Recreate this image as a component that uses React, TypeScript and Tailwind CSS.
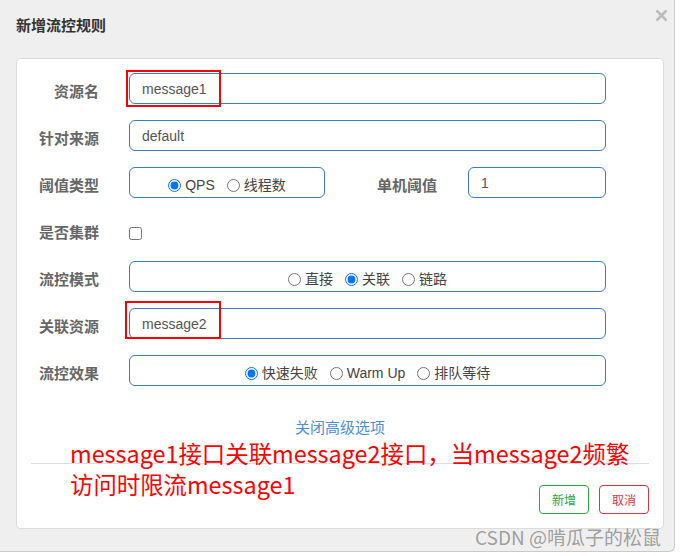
import React from 'react'

const cjk = "font-['Noto_Sans_CJK_SC',sans-serif]"
const mixed = "font-['Liberation_Sans','Noto_Sans_CJK_SC',sans-serif]"

function FieldLabel({ children, width = 'w-[82px]' }: { children: React.ReactNode; width?: string }) {
  return (
    <div className={`${width} shrink-0 pt-[5px] text-right text-[15px] leading-[20px] font-bold text-[#666] ${cjk}`}>
      {children}
    </div>
  )
}

function TextBox({ value, className = '' }: { value: string; className?: string }) {
  return (
    <input
      readOnly
      defaultValue={value}
      className={`h-[31px] rounded-md border border-[#3a7cbd] bg-white px-[12px] text-[14px] text-[#555] outline-none ${mixed} ${className}`}
    />
  )
}

function Radio({ name, label, checked }: { name: string; label: string; checked?: boolean }) {
  return (
    <label className="flex items-center gap-[4px]">
      <input type="radio" name={name} defaultChecked={checked} className="m-0 h-[13px] w-[13px]" />
      <span>{label}</span>
    </label>
  )
}

function RadioGroup({ name, options, checked, className = '' }: { name: string; options: string[]; checked: number; className?: string }) {
  return (
    <div
      className={`flex h-[31px] items-center justify-center gap-[12px] rounded-md border border-[#3a7cbd] bg-white pt-[5px] text-[14px] leading-[20px] text-[#444] ${mixed} ${className}`}
    >
      {options.map((o, i) => (
        <Radio key={o} name={name} label={o} checked={i === checked} />
      ))}
    </div>
  )
}

export default function App() {
  return (
    <div className="relative h-[556px] w-[681px] overflow-hidden bg-white">
      <div className="flex h-[552px] w-[675px] flex-col rounded-br-md border-r border-b border-[#c9c9c9] bg-[#efefef]">
        {/* header */}
        <div className="flex h-[58px] shrink-0">
          <div className={`ml-4 mt-[15px] text-[15px] leading-[20px] font-bold text-[#333] ${cjk}`}>新增流控规则</div>
          <svg className="ml-auto mr-[6px] mt-[9px]" width="13" height="13" viewBox="0 0 13 13">
            <path d="M1.5 1.5 L11.5 11.5 M11.5 1.5 L1.5 11.5" stroke="#bcbcbc" strokeWidth="2.6" strokeLinecap="butt" />
          </svg>
        </div>

        {/* body */}
        <div className="ml-4 flex h-[471px] w-[648px] flex-col rounded border border-[#dcdcdc] bg-white">
          <div className="flex flex-col gap-4 pt-[14px]">
            <div className="flex h-[31px] items-center">
              <FieldLabel>资源名</FieldLabel>
              <TextBox value="message1" className="ml-[30px] w-[477px]" />
            </div>
            <div className="flex h-[31px] items-center">
              <FieldLabel>针对来源</FieldLabel>
              <TextBox value="default" className="ml-[30px] w-[477px]" />
            </div>
            <div className="flex h-[31px] items-center">
              <FieldLabel>阈值类型</FieldLabel>
              <RadioGroup name="grade" options={['QPS', '线程数']} checked={0} className="ml-[30px] w-[196px]" />
              <FieldLabel width="w-[112px]">单机阈值</FieldLabel>
              <TextBox value="1" className="ml-[31px] w-[138px]" />
            </div>
            <div className="flex h-[31px] items-center">
              <FieldLabel>是否集群</FieldLabel>
              <input type="checkbox" className="m-0 ml-[30px] mt-[7px] h-[13px] w-[13px]" />
            </div>
            <div className="flex h-[31px] items-center">
              <FieldLabel>流控模式</FieldLabel>
              <RadioGroup name="strategy" options={['直接', '关联', '链路']} checked={1} className="ml-[30px] w-[477px]" />
            </div>
            <div className="flex h-[31px] items-center">
              <FieldLabel>关联资源</FieldLabel>
              <TextBox value="message2" className="ml-[30px] w-[477px]" />
            </div>
            <div className="flex h-[31px] items-center">
              <FieldLabel>流控效果</FieldLabel>
              <RadioGroup name="behavior" options={['快速失败', 'Warm Up', '排队等待']} checked={0} className="ml-[30px] w-[477px]" />
            </div>
          </div>

          <div className={`mt-[31px] text-center text-[15px] leading-[20px] text-[#4a8fd6] ${cjk}`}>关闭高级选项</div>

          <div className="mx-[14px] mt-[26px] border-t border-[#dddddd]" />

          <div className={`mt-[21px] flex justify-end gap-[10px] px-[14px] text-[12px] ${cjk}`}>
            <button className="h-[29px] w-[50px] rounded-[4px] border border-[#28a745] text-[#28a745]">新增</button>
            <button className="h-[29px] w-[50px] rounded-[4px] border border-[#dc3545] text-[#dc3545]">取消</button>
          </div>
        </div>
      </div>

      {/* annotations */}
      <div className="pointer-events-none absolute left-[126px] top-[70px] h-[37px] w-[95px] border-2 border-[#ff0000]" />
      <div className="pointer-events-none absolute left-[125px] top-[301px] h-[38px] w-[96px] border-2 border-[#ff0000]" />
      <div className={`pointer-events-none absolute left-[70px] top-[438px] whitespace-nowrap text-[23.4px] leading-[31px] text-[#ff0000] ${cjk}`}>
        message1接口关联message2接口，当message2频繁
        <br />
        访问时限流message1
      </div>
      <div className={`pointer-events-none absolute left-[475px] top-[525px] whitespace-nowrap text-[19px] leading-[24px] text-[#8a8a8a]/80 ${cjk}`}>
        CSDN @啃瓜子的松鼠
      </div>
    </div>
  )
}
